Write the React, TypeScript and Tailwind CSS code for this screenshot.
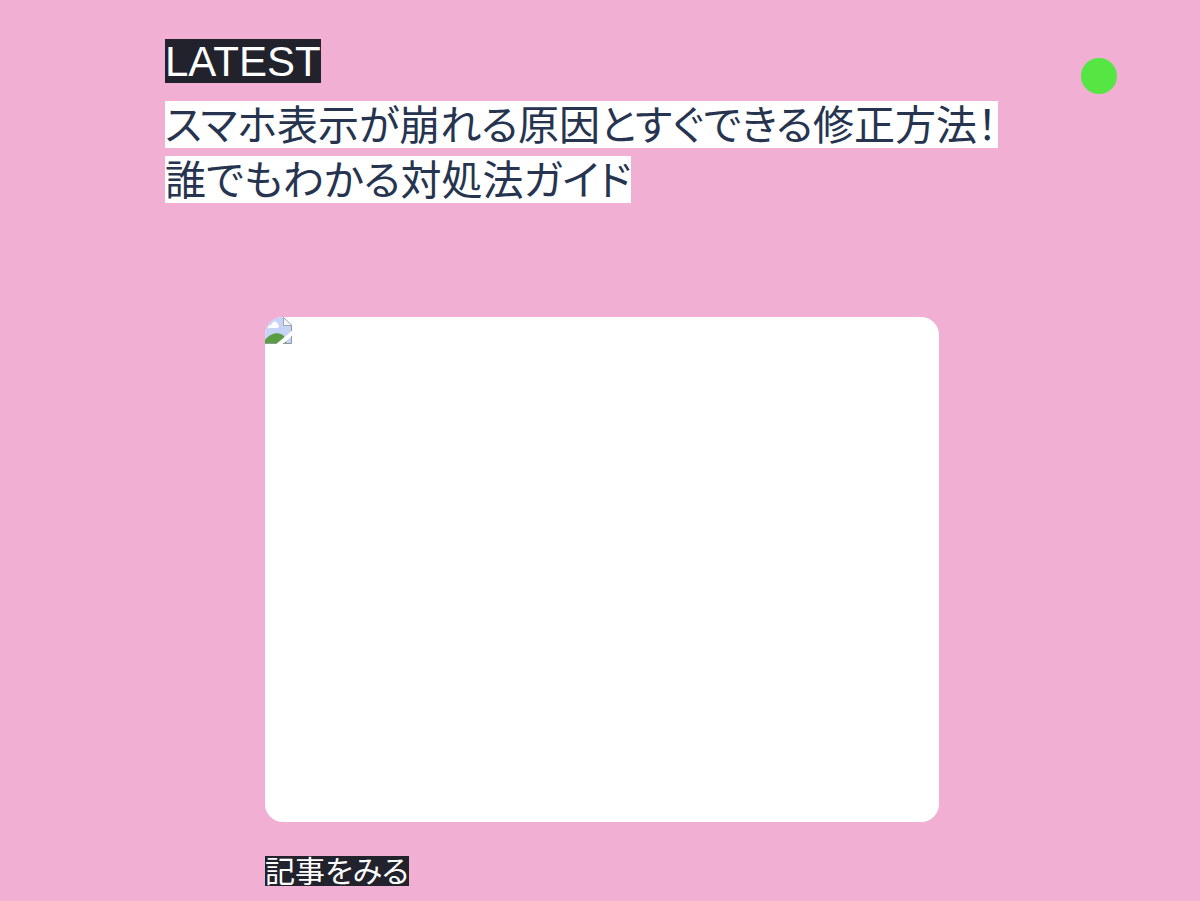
const titleLines = ['スマホ表示が崩れる原因とすぐできる修正方法！', '誰でもわかる対処法ガイド'];

function BrokenImageIcon() {
  return (
    <svg viewBox="0 0 28 28" className="block size-7" role="img" aria-label="画像を読み込めません">
      <path d="M0 0H19L27 9V27H0Z" fill="#c5d3f5" />
      <path d="M0 0H11Q4 4 0 11Z" fill="#e3e6f8" />
      <path d="M3 11C3 8 6 8 7 7C8 3 13 4 13 8C15 9 14 11 11 11H5C3 12 3 11 3 11Z" fill="#fff" />
      <path d="M0 27V23C5 16 14 14 19 19L22 27Z" fill="#5a9d43" />
      <path d="M28 13V18L18 27V28H10Z" fill="#fff" />
      <path d="M18.500 0.500V8.500H27Z" fill="#f7f7fc" stroke="#a3a5b3" />
      <path d="M26.500 9V14M26.500 19V26.500H18M11 26.500H0" fill="none" stroke="#8f98a3" />
    </svg>
  );
}

export default function App() {
  return (
    <div className="min-h-screen overflow-x-hidden bg-[#f0afd3] font-['Liberation_Sans','Noto_Sans_CJK_JP',sans-serif] text-[#26344f]">
      <main className="mx-auto w-full max-w-[870px] pt-[39px] pb-[15px]">
        <header>
          <p className="w-fit bg-[#22222d] pt-0.5 text-[42px] leading-[42px] text-white">LATEST</p>
          <h1 className="mt-[18px] flex flex-col items-start gap-2 font-['Noto_Sans_CJK_JP',sans-serif] text-[41px] leading-[43px] font-normal [font-feature-settings:'palt']">
            {titleLines.map((line) => (
              <span key={line} className="bg-white pb-1">{line}</span>
            ))}
          </h1>
        </header>
        <article className="mt-[114px] ml-[100px] max-w-[674px]">
          <div className="aspect-[674/505] overflow-hidden rounded-[18px] bg-white">
            <BrokenImageIcon />
          </div>
          <a
            href="#article"
            className="mt-[34px] block w-fit bg-[#22222d] pb-1 font-['Noto_Sans_CJK_JP',sans-serif] text-[30px] leading-[26px] text-white [font-feature-settings:'palt']"
          >
            記事をみる
          </a>
        </article>
      </main>
      <div className="pointer-events-none fixed top-[58px] right-[83px] size-9 rounded-full bg-[#55e644]" />
    </div>
  );
}
